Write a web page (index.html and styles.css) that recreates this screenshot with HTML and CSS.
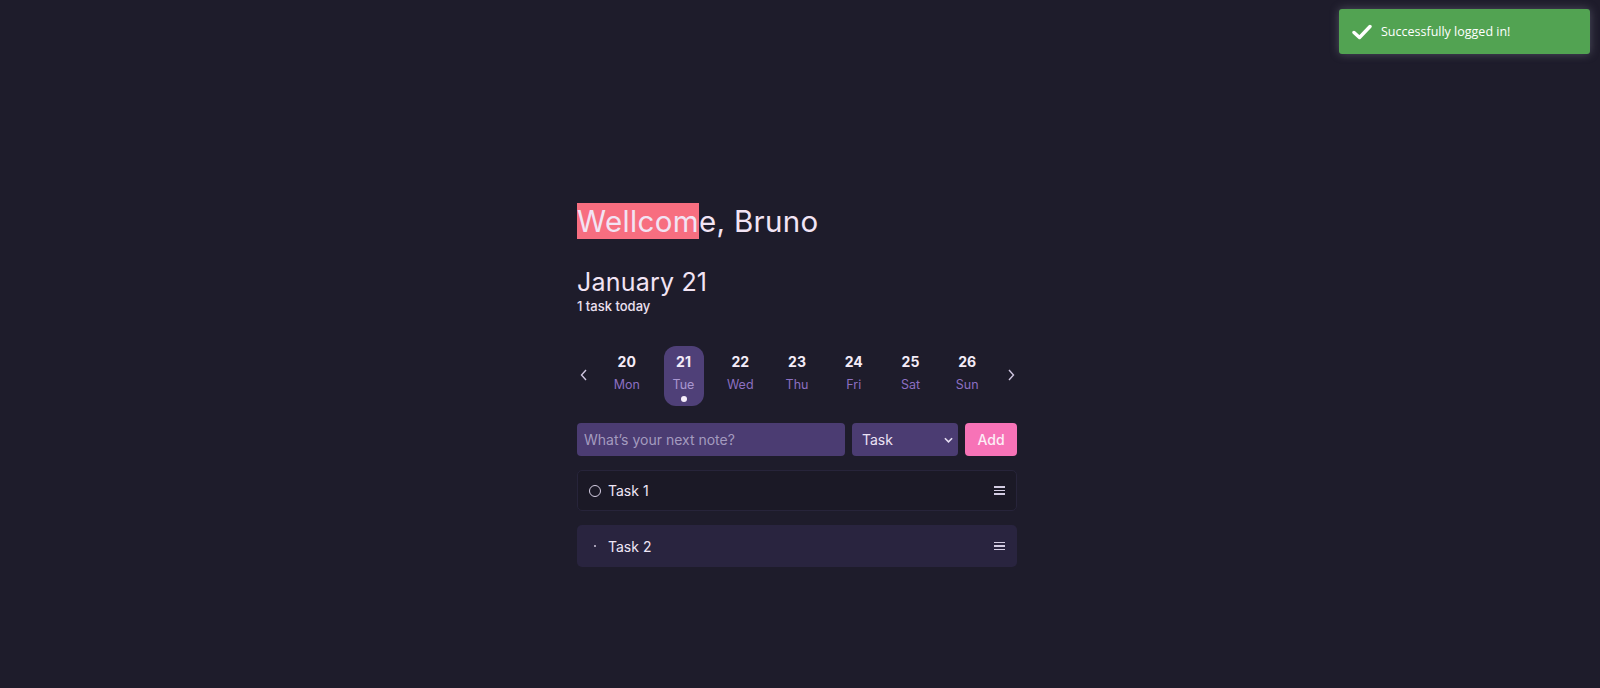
FILE: index.html
```html
<!DOCTYPE html>
<html lang="en">
<head>
<meta charset="utf-8">
<title>Tasks</title>
<link rel="stylesheet" href="styles.css">
</head>
<body>
<div class="toast">
  <svg class="toast-icon" viewBox="0 0 20 16" width="20" height="16"><path d="M2 8.5 L7.5 13.5 L18 2.5" fill="none" stroke="#fff" stroke-width="3.4" stroke-linecap="round" stroke-linejoin="round"/></svg>
  <span class="toast-text">Successfully logged in!</span>
</div>
<main class="page">
  <section class="app">
    <h1 class="welcome"><span class="mark">Wellcom</span>e, Bruno</h1>
    <h2 class="date">January 21</h2>
    <p class="count">1 task today</p>

    <div class="week">
      <button class="arrow" aria-label="previous"><svg viewBox="0 0 8 12" width="8" height="12"><path d="M6 1 L1.5 6 L6 11" fill="none" stroke="#cfc6e0" stroke-width="1.4"/></svg></button>
      <div class="day"><span class="num">20</span><span class="name">Mon</span></div>
      <div class="day active"><span class="num">21</span><span class="name">Tue</span><span class="dot"></span></div>
      <div class="day"><span class="num">22</span><span class="name">Wed</span></div>
      <div class="day"><span class="num">23</span><span class="name">Thu</span></div>
      <div class="day"><span class="num">24</span><span class="name">Fri</span></div>
      <div class="day"><span class="num">25</span><span class="name">Sat</span></div>
      <div class="day"><span class="num">26</span><span class="name">Sun</span></div>
      <button class="arrow" aria-label="next"><svg viewBox="0 0 8 12" width="8" height="12"><path d="M2 1 L6.5 6 L2 11" fill="none" stroke="#cfc6e0" stroke-width="1.4"/></svg></button>
    </div>

    <form class="add-row">
      <input class="note-input" type="text" placeholder="What’s your next note?">
      <div class="select">
        <span>Task</span>
        <svg viewBox="0 0 10 6" width="9" height="6"><path d="M1 1 L5 5 L9 1" fill="none" stroke="#e6def2" stroke-width="1.8"/></svg>
      </div>
      <button class="add-btn" type="button">Add</button>
    </form>

    <ul class="tasks">
      <li class="task task-open">
        <span class="circle"></span>
        <span class="task-label">Task 1</span>
        <span class="burger"><i></i><i></i><i></i></span>
      </li>
      <li class="task task-note">
        <span class="bullet"><i></i></span>
        <span class="task-label">Task 2</span>
        <span class="burger"><i></i><i></i><i></i></span>
      </li>
    </ul>
  </section>
</main>
</body>
</html>
```

FILE: styles.css
```css
* { box-sizing: border-box; }

html, body {
  margin: 0;
  height: 688px;
  background: #1e1c2b;
  overflow: hidden;
}

body {
  font-family: Inter, "Noto Sans", sans-serif;
  color: #f2e4f4;
  position: relative;
}

.toast {
  position: absolute;
  top: 9px;
  right: 10px;
  width: 251px;
  height: 45px;
  background: #52a352;
  border-radius: 3px;
  box-shadow: 0 0 10px rgba(140, 140, 160, 0.45);
  display: flex;
  align-items: center;
  padding-left: 13px;
  gap: 9px;
}

.toast-text {
  font-family: "Open Sans", "Liberation Sans", sans-serif;
  font-size: 12.5px;
  color: #ffffff;
}

.page {
  display: flex;
  justify-content: center;
  padding: 205px 6px 0 0;
}

.app {
  width: 440px;
}

.welcome {
  margin: 0;
  font-size: 29.5px;
  line-height: 33px;
  font-weight: 400;
  letter-spacing: 0.35px;
}

.mark {
  background: #f76e80;
}

.date {
  margin: 29px 0 0;
  font-size: 25px;
  line-height: 30px;
  font-weight: 400;
  letter-spacing: 0.2px;
}

.count {
  margin: 1px 0 0;
  font-size: 13px;
  line-height: 16px;
  font-weight: 500;
  color: #ece0f0;
}

.week {
  margin-top: 32px;
  display: flex;
  justify-content: space-between;
  align-items: center;
  height: 60px;
}

.arrow {
  width: 13px;
  height: 20px;
  padding: 0;
  border: 0;
  background: none;
  display: flex;
  align-items: center;
  justify-content: center;
  margin-top: -3px;
}

.day {
  width: 40px;
  height: 60px;
  border-radius: 12px;
  display: flex;
  flex-direction: column;
  align-items: center;
  padding-top: 7px;
}

.day .num {
  font-size: 14px;
  line-height: 18px;
  font-weight: 700;
  color: #f4ecf8;
}

.day .name {
  margin-top: 5px;
  font-size: 12.5px;
  line-height: 17px;
  color: #8c6fc1;
}

.day.active {
  background: #4f4078;
}

.day.active .name {
  color: #a997d1;
}

.dot {
  margin-top: 3px;
  width: 6px;
  height: 6px;
  border-radius: 50%;
  background: #f6eefb;
}

.add-row {
  margin: 17px 0 0;
  display: flex;
  gap: 7px;
  height: 33px;
}

.note-input {
  flex: 1;
  height: 33px;
  border: 0;
  border-radius: 4px;
  background: #4b3c72;
  padding: 0 7px;
  font-family: inherit;
  font-size: 14px;
  color: #eee;
  outline: none;
}

.note-input::placeholder {
  color: #a49bbf;
}

.select {
  width: 106px;
  height: 33px;
  border-radius: 4px;
  background: #4b3c72;
  display: flex;
  align-items: center;
  justify-content: space-between;
  padding: 0 5px 0 10px;
  font-size: 14px;
  color: #ebe2f5;
}

.add-btn {
  width: 52px;
  height: 33px;
  border: 0;
  border-radius: 4px;
  background: #f773b7;
  font-family: inherit;
  font-size: 14px;
  font-weight: 500;
  color: #fdeef6;
  padding: 0;
}

.tasks {
  list-style: none;
  margin: 14px 0 0;
  padding: 0;
  display: flex;
  flex-direction: column;
  gap: 14px;
}

.task {
  height: 41px;
  border-radius: 5px;
  display: flex;
  align-items: center;
  padding: 0 12px 0 12px;
  font-size: 14px;
  color: #efe6f6;
}

.task-open {
  background: #1b1926;
  border: 1px solid #27243a;
  padding-left: 11px;
  padding-right: 11px;
}

.task-note {
  background: #29243f;
  height: 42px;
}

.circle {
  width: 12px;
  height: 12px;
  border-radius: 50%;
  border: 1.4px solid #d6cfe4;
}

.bullet {
  width: 12px;
  height: 12px;
  display: flex;
  align-items: center;
  justify-content: center;
}

.bullet i {
  width: 2px;
  height: 2px;
  border-radius: 50%;
  background: #cfc7dd;
}

.task-label {
  margin-left: 7px;
  flex: 1;
}

.burger {
  width: 11px;
  display: flex;
  flex-direction: column;
  gap: 2px;
}

.burger i {
  display: block;
  height: 1.6px;
  background: #d3cce2;
}
```
